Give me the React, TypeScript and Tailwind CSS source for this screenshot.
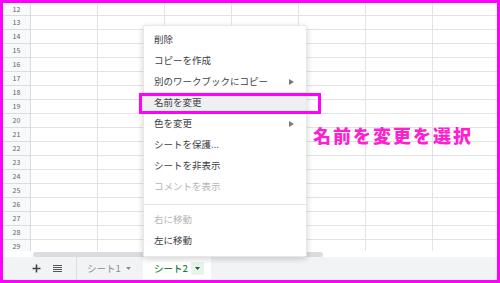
import React from "react";

const rows = Array.from({ length: 18 }, (_, i) => 12 + i);
const cols = Array.from({ length: 7 }, (_, i) => i);

const font = { fontFamily: '"Noto Sans CJK JP", "Noto Sans", sans-serif' };

function Arrow() {
  return (
    <svg width="5" height="6" viewBox="0 0 5 6" className="shrink-0">
      <path d="M0 0 L5 3 L0 6 Z" fill="#7a7a7a" />
    </svg>
  );
}

function Item({ label, arrow, disabled, active }: { label: string; arrow?: boolean; disabled?: boolean; active?: boolean }) {
  return (
    <div
      className={`h-[21px] flex items-center justify-between pl-[10px] pr-[12px] text-[9.5px] ${
        disabled ? "text-[#b5b5b5]" : "text-[#3c4043]"
      } ${active ? "bg-[#eeeff1]" : ""}`}
    >
      <span>{label}</span>
      {arrow && <Arrow />}
    </div>
  );
}

export default function App() {
  return (
    <div
      className="w-[500px] h-[283px] border-[3px] border-[#ff00ff] relative overflow-hidden bg-white flex flex-col"
      style={font}
    >
      <div className="h-[248px] overflow-hidden shrink-0">
        {rows.map((r) => (
          <div key={r} className={`flex ${r === 12 ? "h-[13px]" : "h-[14px]"}`}>
            <div className="w-[28px] shrink-0 bg-[#f8f9fa] border-r border-b border-[#dadce0] flex items-center justify-center text-[7px] text-[#5f6368]">
              {r}
            </div>
            {cols.map((c) => (
              <div key={c} className="w-[67px] shrink-0 border-r border-b border-[#e2e3e3]" />
            ))}
          </div>
        ))}
      </div>
      <div className="h-[6px] shrink-0 bg-white flex items-center pl-[30px]">
        <div className="h-[5px] w-[290px] rounded-[3px] bg-[#dadce0]" />
      </div>
      <div className="h-[23px] shrink-0 bg-[#f1f3f4] flex items-stretch">
        <div className="w-[74px] flex items-center pl-[29px] gap-[12px] border-r border-[#dadce0]">
          <svg width="9" height="9" viewBox="0 0 9 9">
            <path d="M4.5 0.5 V8.5 M0.5 4.5 H8.5" stroke="#444" strokeWidth="1.6" />
          </svg>
          <svg width="9" height="8" viewBox="0 0 9 8">
            <path d="M0 0.5 H9 M0 2.5 H9 M0 4.5 H9 M0 6.5 H9" stroke="#555" strokeWidth="1" />
          </svg>
        </div>
        <div className="w-[66px] flex items-center pl-[10px] gap-[5px] text-[9.5px] text-[#8a8d91]">
          <span>シート1</span>
          <svg width="5" height="3" viewBox="0 0 5 3">
            <path d="M0 0 H5 L2.5 3 Z" fill="#8a8d91" />
          </svg>
        </div>
        <div className="w-[68px] bg-white flex items-center pl-[11px] gap-[3px] text-[9.5px] font-medium text-[#188038]">
          <span>シート2</span>
          <div className="w-[13px] h-[13px] bg-[#e6f4ea] flex items-center justify-center rounded-[1px]">
            <svg width="5" height="3" viewBox="0 0 5 3">
              <path d="M0 0 H5 L2.5 3 Z" fill="#1e5f33" />
            </svg>
          </div>
        </div>
      </div>

      <div className="absolute left-[140px] top-[22px] w-[164px] h-[232px] bg-white rounded-[2px] shadow-[0_2px_6px_rgba(0,0,0,0.18)] border border-[#e8e8e8] pt-[3px]">
        <Item label="削除" />
        <Item label="コピーを作成" />
        <Item label="別のワークブックにコピー" arrow />
        <Item label="名前を変更" active />
        <Item label="色を変更" arrow />
        <Item label="シートを保護..." />
        <Item label="シートを非表示" />
        <Item label="コメントを表示" disabled />
        <div className="mt-[7px] mb-[4px] h-px bg-[#e6e6e6]" />
        <Item label="右に移動" disabled />
        <Item label="左に移動" />
      </div>

      <div className="absolute left-[136px] top-[90px] w-[182px] h-[21px] border-[3px] border-[#ff00ff]" />

      <div className="absolute left-[310px] top-[119px] text-[18px] leading-[26px] font-black tracking-[2px] text-[#ff1ed2]">
        名前を変更を選択
      </div>
    </div>
  );
}
